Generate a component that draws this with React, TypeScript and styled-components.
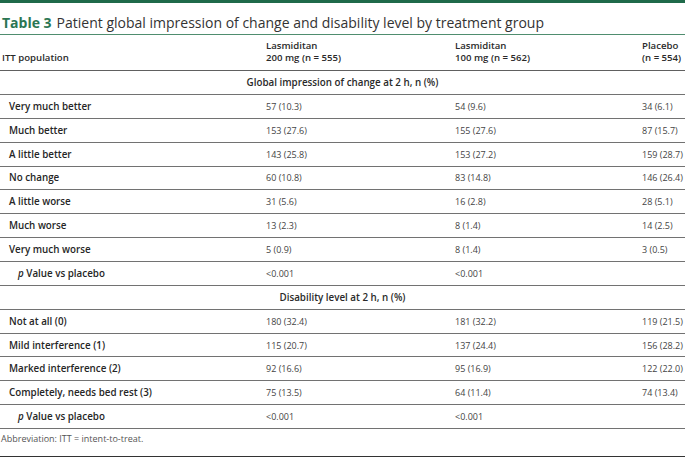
import React from "react";
import styled, { createGlobalStyle } from "styled-components";

const GlobalStyle = createGlobalStyle`
  html, body {
    margin: 0;
    padding: 0;
    background: #ffffff;
  }
  body {
    font-family: "Open Sans", "Noto Sans", "Liberation Sans", sans-serif;
    color: #222;
  }
`;

type Row = {
  label: string;
  values: [string, string, string];
  pValue?: boolean;
};

type Section = {
  title: string;
  rows: Row[];
};

const sections: Section[] = [
  {
    title: "Global impression of change at 2 h, n (%)",
    rows: [
      { label: "Very much better", values: ["57 (10.3)", "54 (9.6)", "34 (6.1)"] },
      { label: "Much better", values: ["153 (27.6)", "155 (27.6)", "87 (15.7)"] },
      { label: "A little better", values: ["143 (25.8)", "153 (27.2)", "159 (28.7)"] },
      { label: "No change", values: ["60 (10.8)", "83 (14.8)", "146 (26.4)"] },
      { label: "A little worse", values: ["31 (5.6)", "16 (2.8)", "28 (5.1)"] },
      { label: "Much worse", values: ["13 (2.3)", "8 (1.4)", "14 (2.5)"] },
      { label: "Very much worse", values: ["5 (0.9)", "8 (1.4)", "3 (0.5)"] },
      { label: "Value vs placebo", values: ["<0.001", "<0.001", ""], pValue: true },
    ],
  },
  {
    title: "Disability level at 2 h, n (%)",
    rows: [
      { label: "Not at all (0)", values: ["180 (32.4)", "181 (32.2)", "119 (21.5)"] },
      { label: "Mild interference (1)", values: ["115 (20.7)", "137 (24.4)", "156 (28.2)"] },
      { label: "Marked interference (2)", values: ["92 (16.6)", "95 (16.9)", "122 (22.0)"] },
      { label: "Completely, needs bed rest (3)", values: ["75 (13.5)", "64 (11.4)", "74 (13.4)"] },
      { label: "Value vs placebo", values: ["<0.001", "<0.001", ""], pValue: true },
    ],
  },
];

const columnWidths = [257, 189, 187, 52];

const Page = styled.div`
  width: 685px;
  height: 460px;
  overflow: hidden;
  background: #fff;
`;

const TopBar = styled.div`
  height: 3px;
  background: #1f6a4a;
`;

const Caption = styled.div`
  display: flex;
  align-items: baseline;
  gap: 5px;
  padding: 11px 0 3px 2px;
  font-size: 14px;
  line-height: 17px;
  color: #333;
  border-bottom: 1px solid #4f8d6f;
`;

const CaptionLabel = styled.span`
  color: #2b7653;
  font-weight: 700;
`;

const Table = styled.table`
  width: 685px;
  border-collapse: collapse;
  table-layout: fixed;
  font-size: 9px;
`;

const HeadCell = styled.th<{ $first?: boolean }>`
  height: 29px;
  padding: 0 0 6px ${(p) => (p.$first ? "2px" : "9px")};
  text-align: left;
  vertical-align: bottom;
  font-size: 9.6px;
  font-weight: 600;
  line-height: 12px;
  color: #2a2a2a;
  border-bottom: 1px solid #606060;
  white-space: nowrap;
`;

const SectionCell = styled.td`
  height: 23px;
  padding: 0;
  text-align: center;
  font-size: 9.8px;
  font-weight: 600;
  color: #2a2a2a;
  border-bottom: 1px solid #727272;
`;

const LabelCell = styled.td<{ $indent?: boolean }>`
  height: 22.85px;
  padding: 0 0 0 ${(p) => (p.$indent ? "18px" : "9px")};
  font-size: 9.8px;
  font-weight: 600;
  color: #262626;
  border-bottom: 1px solid #727272;
  white-space: nowrap;
`;

const ValueCell = styled.td`
  height: 22.85px;
  padding: 0 0 0 9px;
  color: #444;
  border-bottom: 1px solid #727272;
  white-space: nowrap;
`;

const FootCell = styled.td`
  height: 24px;
  padding: 3px 0 0 1px;
  vertical-align: top;
  line-height: 14px;
  color: #555;
  border-bottom: 1px solid #333;
`;

export default function App() {
  return (
    <Page>
      <GlobalStyle />
      <TopBar />
      <Caption>
        <CaptionLabel>Table 3</CaptionLabel>
        <span>Patient global impression of change and disability level by treatment group</span>
      </Caption>
      <Table>
        <colgroup>
          {columnWidths.map((w, i) => (
            <col key={i} style={{ width: w }} />
          ))}
        </colgroup>
        <thead>
          <tr>
            <HeadCell $first>ITT population</HeadCell>
            <HeadCell>
              Lasmiditan
              <br />
              200 mg (n = 555)
            </HeadCell>
            <HeadCell>
              Lasmiditan
              <br />
              100 mg (n = 562)
            </HeadCell>
            <HeadCell>
              Placebo
              <br />
              (n = 554)
            </HeadCell>
          </tr>
        </thead>
        <tbody>
          {sections.map((section) => (
            <React.Fragment key={section.title}>
              <tr>
                <SectionCell colSpan={4}>{section.title}</SectionCell>
              </tr>
              {section.rows.map((row, i) => (
                <tr key={i}>
                  <LabelCell $indent={row.pValue}>
                    {row.pValue ? (
                      <>
                        <i>p</i> {row.label}
                      </>
                    ) : (
                      row.label
                    )}
                  </LabelCell>
                  {row.values.map((v, j) => (
                    <ValueCell key={j}>{v}</ValueCell>
                  ))}
                </tr>
              ))}
            </React.Fragment>
          ))}
          <tr>
            <FootCell colSpan={4}>Abbreviation: ITT = intent-to-treat.</FootCell>
          </tr>
        </tbody>
      </Table>
    </Page>
  );
}
